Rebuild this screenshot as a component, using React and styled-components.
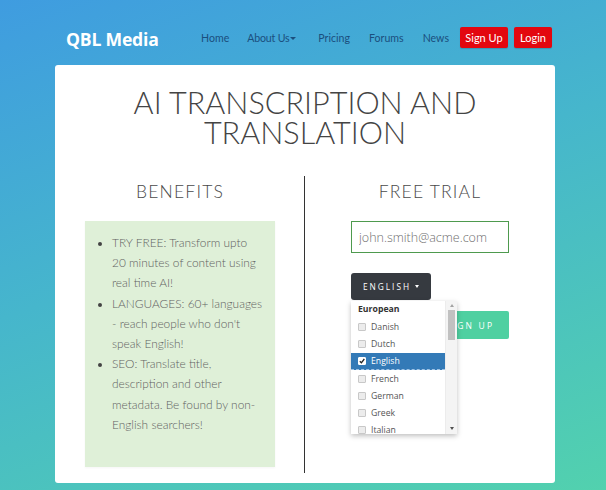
import React from "react";
import styled, { createGlobalStyle } from "styled-components";

const Global = createGlobalStyle`
  html, body { margin: 0; padding: 0; }
  body {
    min-height: 100vh;
    background: linear-gradient(160deg, #3f9ce0 0%, #46b6cc 45%, #52d1ae 100%);
    font-family: "Lato", "Open Sans", sans-serif;
    overflow: hidden;
  }
  #root { min-height: 100vh; }
`;

const Page = styled.div`
  width: 500px;
  margin: 0 0 0 55px;
`;

const Navbar = styled.nav`
  display: flex;
  align-items: center;
  height: 65px;
  padding: 0 3px 0 11px;
  box-sizing: border-box;
`;

const Brand = styled.div`
  font-family: "Open Sans", sans-serif;
  font-weight: 700;
  font-size: 17.6px;
  color: #fff;
  letter-spacing: -0.2px;
  margin-right: auto;
  padding-top: 13px;
`;

const NavLinks = styled.div`
  display: flex;
  align-items: center;
  padding-top: 9px;
`;

const NavLink = styled.a`
  font-family: "Lato", sans-serif;
  font-size: 10.6px;
  color: #1b4f7e;
  margin-right: ${(p) => p.$gap}px;
  letter-spacing: ${(p) => (p.$tight ? "-0.2px" : "0")};
  text-decoration: none;
  display: flex;
  align-items: center;
  white-space: pre;
  padding-top: 2px;
`;

const Caret = styled.span`
  display: inline-block;
  width: 0;
  height: 0;
  border-left: 3px solid transparent;
  border-right: 3px solid transparent;
  border-top: 3.5px solid currentColor;
  margin-left: 1px;
`;

const RedButton = styled.a`
  font-family: "Lato", sans-serif;
  font-size: 11px;
  color: #fff;
  background: #e3070f;
  border-radius: 2px;
  height: 21px;
  width: ${(p) => p.$w}px;
  display: flex;
  align-items: center;
  justify-content: center;
  margin-left: ${(p) => p.$ml}px;
  box-shadow: 0 1px 1px rgba(0, 0, 0, 0.15);
`;

const Card = styled.main`
  background: #fff;
  border-radius: 3px;
  height: 418px;
  box-sizing: border-box;
  padding-top: 23px;
`;

const Title = styled.h1`
  margin: 0;
  font-family: "Lato", sans-serif;
  font-weight: 300;
  font-size: 30.6px;
  line-height: 30px;
  color: #444;
  text-align: center;
  letter-spacing: 0;
`;

const Columns = styled.div`
  display: grid;
  grid-template-columns: 250px 250px;
  margin-top: 28px;
`;

const Column = styled.section`
  display: flex;
  flex-direction: column;
  align-items: center;
  height: 297px;
  border-left: ${(p) => (p.$divider ? "1px solid #333" : "none")};
  margin-left: ${(p) => (p.$divider ? "-1px" : "0")};
  box-sizing: border-box;
  position: relative;
`;

const Heading = styled.h2`
  margin: 4px 0 0;
  font-family: "Lato", sans-serif;
  font-weight: 300;
  font-size: 17.5px;
  line-height: 24px;
  letter-spacing: 1.2px;
  color: #4a4a4a;
`;

const BenefitBox = styled.div`
  width: 190px;
  height: 246px;
  margin-top: 17px;
  background: #dff0d8;
  box-sizing: border-box;
  padding: 12px 11px 0 0;
  box-shadow: 0 1px 2px rgba(0, 0, 0, 0.04);
`;

const List = styled.ul`
  margin: 0;
  padding-left: 27px;
  font-family: "Lato", sans-serif;
  font-weight: 300;
  font-size: 11.9px;
  line-height: 20.2px;
  color: #626262;
  li::marker { color: #444; font-size: 11px; }
`;

const Form = styled.div`
  width: 158px;
  margin-top: 17px;
  display: flex;
  flex-direction: column;
`;

const EmailInput = styled.input`
  width: 158px;
  height: 32px;
  box-sizing: border-box;
  border: 1px solid #4e9a4e;
  padding: 0 7px;
  font-family: "Open Sans", sans-serif;
  font-weight: 300;
  font-size: 12.5px;
  color: #555;
  outline: none;
  &::placeholder { color: #6f6f6f; }
`;

const LangWrap = styled.div`
  position: relative;
  margin-top: 20px;
  align-self: flex-start;
`;

const LangButton = styled.button`
  width: 80px;
  height: 27px;
  border: none;
  border-radius: 3px;
  background: #363a40;
  color: #fff;
  font-family: "Open Sans", sans-serif;
  font-size: 8.3px;
  letter-spacing: 2px;
  display: flex;
  align-items: center;
  justify-content: center;
  gap: 3px;
  padding: 0;
`;

const SmallCaret = styled.span`
  width: 0;
  height: 0;
  border-left: 2.5px solid transparent;
  border-right: 2.5px solid transparent;
  border-top: 3px solid #fff;
  margin-left: 1px;
`;

const Dropdown = styled.div`
  position: absolute;
  top: 28px;
  left: 0;
  width: 106px;
  height: 133px;
  background: #fff;
  box-shadow: 0 2px 5px rgba(0, 0, 0, 0.25);
  display: flex;
  z-index: 5;
  overflow: hidden;
`;

const Options = styled.div`
  flex: 1;
  font-family: "Open Sans", sans-serif;
  font-size: 8.7px;
  color: #444;
`;

const GroupLabel = styled.div`
  height: 17px;
  line-height: 17px;
  font-weight: 700;
  padding-left: 7px;
  color: #333;
`;

const Option = styled.div`
  height: 17.3px;
  display: flex;
  align-items: center;
  padding-left: 7px;
  box-sizing: border-box;
  background: ${(p) => (p.$selected ? "#337ab7" : "transparent")};
  color: ${(p) => (p.$selected ? "#fff" : "#555")};
  border-bottom: ${(p) => (p.$selected ? "1px dashed #9ec3e6" : "none")};
`;

const Check = styled.span`
  width: 8px;
  height: 8px;
  box-sizing: border-box;
  border: 1px solid ${(p) => (p.$checked ? "#fff" : "#c8c8c8")};
  background: ${(p) => (p.$checked ? "#fff" : "#ececec")};
  border-radius: 1px;
  margin-right: 5px;
  display: flex;
  align-items: center;
  justify-content: center;
`;

const Scrollbar = styled.div`
  width: 11px;
  background: #f4f4f4;
  border-left: 1px solid #ececec;
  display: flex;
  flex-direction: column;
  align-items: center;
`;

const Arrow = styled.span`
  width: 0;
  height: 0;
  border-left: 2.5px solid transparent;
  border-right: 2.5px solid transparent;
  ${(p) => (p.$up ? "border-bottom: 3px solid #a3a3a3;" : "border-top: 3px solid #505050;")}
  margin: ${(p) => (p.$up ? "3px 0 2px" : "auto 0 4px")};
`;

const Thumb = styled.div`
  width: 7px;
  height: 30px;
  background: #c1c1c1;
  margin-top: 1px;
`;

const SignUpButton = styled.button`
  align-self: flex-end;
  width: 84px;
  height: 28px;
  margin-top: 11px;
  border: none;
  border-radius: 2px;
  background: #4fd0a1;
  color: #fff;
  font-family: "Open Sans", sans-serif;
  font-size: 8.5px;
  letter-spacing: 2.2px;
  padding: 0 0 0 6px;
`;

const langs = ["Danish", "Dutch", "English", "French", "German", "Greek", "Italian"];

export default function App() {
  return (
    <>
      <Global />
      <Page>
        <Navbar>
          <Brand>QBL Media</Brand>
          <NavLinks>
            <NavLink $gap={18}>Home</NavLink>
            <NavLink $gap={22} $tight>
              About Us<Caret />
            </NavLink>
            <NavLink $gap={19}>Pricing</NavLink>
            <NavLink $gap={19}>Forums</NavLink>
            <NavLink $gap={0}>News</NavLink>
            <RedButton $w={48} $ml={11}>Sign Up</RedButton>
            <RedButton $w={38} $ml={6}>Login</RedButton>
          </NavLinks>
        </Navbar>
        <Card>
          <Title>
            AI TRANSCRIPTION AND
            <br />
            TRANSLATION
          </Title>
          <Columns>
            <Column>
              <Heading>BENEFITS</Heading>
              <BenefitBox>
                <List>
                  <li>TRY FREE: Transform upto 20 minutes of content using real time AI!</li>
                  <li>LANGUAGES: 60+ languages - reach people who don't speak English!</li>
                  <li>SEO: Translate title, description and other metadata. Be found by non-English searchers!</li>
                </List>
              </BenefitBox>
            </Column>
            <Column $divider>
              <Heading>FREE TRIAL</Heading>
              <Form>
                <EmailInput placeholder="john.smith@acme.com" />
                <LangWrap>
                  <LangButton>
                    ENGLISH <SmallCaret />
                  </LangButton>
                  <Dropdown>
                    <Options>
                      <GroupLabel>European</GroupLabel>
                      {langs.map((l) => (
                        <Option key={l} $selected={l === "English"}>
                          <Check $checked={l === "English"}>
                            {l === "English" && (
                              <svg width="6" height="6" viewBox="0 0 6 6">
                                <path d="M0.8 3.2 L2.4 4.8 L5.3 1" stroke="#222" strokeWidth="1.3" fill="none" />
                              </svg>
                            )}
                          </Check>
                          {l}
                        </Option>
                      ))}
                    </Options>
                    <Scrollbar>
                      <Arrow $up />
                      <Thumb />
                      <Arrow />
                    </Scrollbar>
                  </Dropdown>
                </LangWrap>
                <SignUpButton>SIGN UP</SignUpButton>
              </Form>
            </Column>
          </Columns>
        </Card>
      </Page>
    </>
  );
}
